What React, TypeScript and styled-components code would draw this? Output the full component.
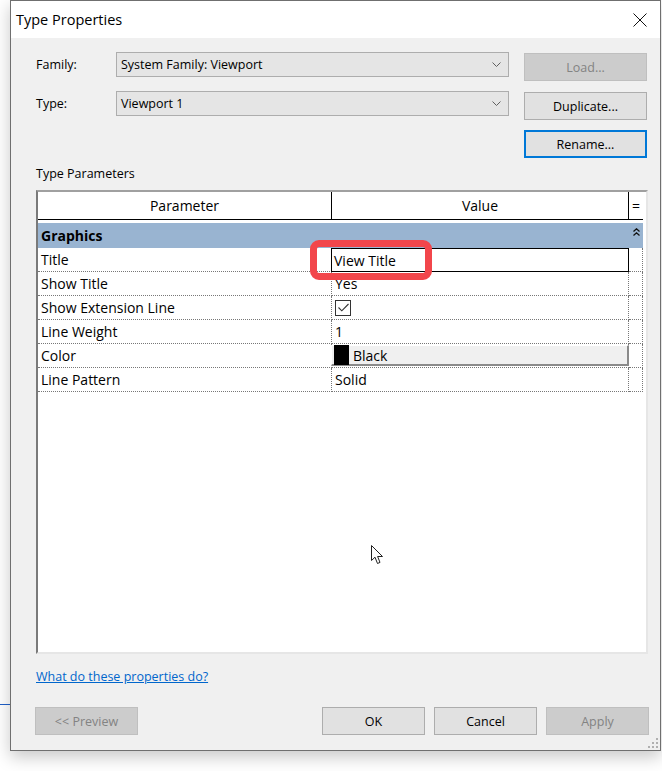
import React from "react";
import styled, { createGlobalStyle } from "styled-components";

const UI_FONT = `"Segoe UI", "Open Sans", "Noto Sans", sans-serif`;

const GlobalStyle = createGlobalStyle`
  html, body {
    margin: 0;
    padding: 0;
    background: #ffffff;
    font-family: ${UI_FONT};
    color: #000;
  }
  * {
    box-sizing: border-box;
  }
`;

const Desktop = styled.div`
  position: relative;
  width: 662px;
  height: 771px;
  overflow: hidden;
`;

// thin blue line of a window behind the dialog
const BackLine = styled.div`
  position: absolute;
  left: 0;
  top: 704px;
  width: 10px;
  height: 1px;
  background: #2060c8;
`;

const Dialog = styled.section`
  position: relative;
  margin-left: 10px;
  width: 651px;
  height: 751px;
  border: 1px solid #6f6f6f;
  display: flex;
  flex-direction: column;
  background: #f0f0f0;
  box-shadow: 0 6px 16px rgba(0, 0, 0, 0.22);
`;

const TitleBar = styled.header`
  height: 37px;
  flex: none;
  background: #ffffff;
  display: flex;
  align-items: center;
  justify-content: space-between;
  padding: 0 13px 0 5px;
  font-size: 14.5px;
`;

const CloseIcon = () => (
  <svg width="14" height="14" viewBox="0 0 14 14">
    <path d="M0.5 0.5 L13.5 13.5 M13.5 0.5 L0.5 13.5" stroke="#111" strokeWidth="1" />
  </svg>
);

const Body = styled.div`
  flex: 1;
  display: flex;
  flex-direction: column;
  padding: 14px 12px 15px 25px;
  font-size: 12.5px;
`;

const TopGrid = styled.div`
  display: grid;
  grid-template-columns: 65px 393px 123px;
  column-gap: 15px;
  grid-auto-rows: 29px;
  row-gap: 10px;
  align-items: start;
`;

const FieldLabel = styled.label`
  height: 25px;
  line-height: 25px;
`;

const Combo = styled.div`
  height: 25px;
  border: 1px solid #adadad;
  background: #e5e5e5;
  display: flex;
  align-items: center;
  justify-content: space-between;
  padding: 0 7px 0 4px;
`;

const Chevron = () => (
  <svg width="9" height="5" viewBox="0 0 9 5">
    <path d="M0.5 0.5 L4.5 4.5 L8.5 0.5" fill="none" stroke="#606060" strokeWidth="1" />
  </svg>
);

const Button = styled.button<{ $disabled?: boolean; $focused?: boolean }>`
  height: 28px;
  margin-top: ${(p) => (p.$focused ? 0 : 1)}px;
  font-family: ${UI_FONT};
  font-size: 12.5px;
  padding: 0;
  background: ${(p) => (p.$disabled ? "#cccccc" : "#e1e1e1")};
  color: ${(p) => (p.$disabled ? "#838383" : "#000")};
  border: ${(p) => (p.$focused ? "2px solid #0078d7" : p.$disabled ? "1px solid #bfbfbf" : "1px solid #adadad")};
`;

const SectionLabel = styled.div`
  margin-top: 7px;
  height: 16px;
  line-height: 16px;
  margin-bottom: 8px;
`;

const Table = styled.div`
  position: relative;
  height: 464px;
  flex: none;
  background: #ffffff;
  border-top: 2px solid #a0a0a0;
  border-left: 2px solid #7a7a7a;
  border-right: 2px solid #e6e6e6;
  border-bottom: 2px solid #e6e6e6;
  font-size: 14px;
  display: grid;
  grid-template-columns: 294px 297px 14px;
  grid-auto-rows: min-content;
  align-content: start;
`;

const HeadCell = styled.div<{ $last?: boolean }>`
  height: 28px;
  display: flex;
  align-items: center;
  justify-content: center;
  border-bottom: 1px solid #000;
  border-right: ${(p) => (p.$last ? "none" : "1px solid #000")};
  margin-bottom: 3px;
`;

const GroupRow = styled.div`
  grid-column: 1 / 3;
  height: 25px;
  background: #99b4d1;
  font-weight: bold;
  display: flex;
  align-items: center;
  padding-left: 3px;
`;

const GroupEnd = styled.div`
  height: 25px;
  background: #99b4d1;
  display: flex;
  justify-content: center;
  padding-top: 5px;
`;

const Cell = styled.div`
  height: 24px;
  display: flex;
  align-items: center;
  padding-left: 3px;
  border-bottom: 1px dotted #777;
  border-right: 1px dotted #777;
  white-space: nowrap;
`;

const EditBox = styled.div`
  height: 24px;
  border: 1px solid #000;
  display: flex;
  align-items: center;
  padding-left: 2px;
  margin-left: -1px;
`;

const ColorButton = styled.div`
  height: 24px;
  padding: 1px 0;
  border-bottom: 1px dotted #777;
  border-right: 1px dotted #777;
  display: flex;
`;

const ColorFace = styled.div`
  flex: 1;
  margin-left: -1px;
  margin-right: -1px;
  background: #f0f0f0;
  border-top: 1px solid #ffffff;
  border-left: 1px solid #ffffff;
  border-right: 2px solid #8a8a8a;
  border-bottom: 2px solid #8a8a8a;
  display: flex;
  align-items: center;
  padding-left: 2px;
  gap: 4px;
`;

const Swatch = styled.span<{ $color: string }>`
  width: 15px;
  height: 20px;
  background: ${(p) => p.$color};
`;

const CheckBox = styled.span`
  width: 16px;
  height: 16px;
  border: 1px solid #333;
  display: flex;
  align-items: center;
  justify-content: center;
`;

const Highlight = styled.div`
  position: absolute;
  left: 272px;
  top: 48px;
  width: 122px;
  height: 40px;
  border: 7px solid #f2464b;
  border-radius: 9px;
  pointer-events: none;
`;

const Cursor = styled.svg`
  position: absolute;
  left: 333px;
  top: 353px;
`;

const HelpLink = styled.a`
  margin-top: 15px;
  height: 16px;
  line-height: 16px;
  color: #0066cc;
  text-decoration: underline;
  align-self: flex-start;
`;

const Footer = styled.div`
  margin-top: 22px;
  display: flex;
  justify-content: space-between;
  margin-left: -1px;
  margin-right: -1px;
`;

const ButtonGroup = styled.div`
  display: flex;
  gap: 9px;
`;

const FooterButton = styled(Button)`
  width: 103px;
  margin-top: 0;
`;

const Grip = styled.svg`
  position: absolute;
  right: 2px;
  bottom: 2px;
`;

const rows: { name: string; value: React.ReactNode; kind?: "edit" | "color" }[] = [
  { name: "Title", value: "View Title", kind: "edit" },
  { name: "Show Title", value: "Yes" },
  {
    name: "Show Extension Line",
    value: (
      <CheckBox>
        <svg width="11" height="9" viewBox="0 0 11 9">
          <path d="M0.5 4.5 L3.8 7.8 L10.5 1" fill="none" stroke="#333" strokeWidth="1.1" />
        </svg>
      </CheckBox>
    ),
  },
  { name: "Line Weight", value: "1" },
  { name: "Color", value: "Black", kind: "color" },
  { name: "Line Pattern", value: "Solid" },
];

function PropertyTable() {
  return (
    <Table>
      <HeadCell>Parameter</HeadCell>
      <HeadCell>Value</HeadCell>
      <HeadCell $last>=</HeadCell>
      <GroupRow>Graphics</GroupRow>
      <GroupEnd>
        <svg width="7" height="8" viewBox="0 0 7 8">
          <path d="M0.5 3.5 L3.5 0.8 L6.5 3.5 M0.5 7.5 L3.5 4.8 L6.5 7.5" fill="none" stroke="#111" strokeWidth="1.3" />
        </svg>
      </GroupEnd>
      {rows.map((r) => (
        <React.Fragment key={r.name}>
          <Cell>{r.name}</Cell>
          {r.kind === "edit" ? (
            <EditBox>{r.value}</EditBox>
          ) : r.kind === "color" ? (
            <ColorButton>
              <ColorFace>
                <Swatch $color="#000" />
                {r.value}
              </ColorFace>
            </ColorButton>
          ) : (
            <Cell>{r.value}</Cell>
          )}
          <Cell />
        </React.Fragment>
      ))}
      <Highlight />
      <Cursor width="13" height="20" viewBox="0 0 13 20">
        <path
          d="M0.5 0.5 L0.5 15.5 L4 12.2 L6.5 18.5 L9 17.4 L6.6 11.5 L11.5 11.5 Z"
          fill="#fff"
          stroke="#222"
          strokeWidth="1"
        />
      </Cursor>
    </Table>
  );
}

export default function App() {
  return (
    <>
      <GlobalStyle />
      <Desktop>
        <BackLine />
        <Dialog>
          <TitleBar>
            <span>Type Properties</span>
            <CloseIcon />
          </TitleBar>
          <Body>
            <TopGrid>
              <FieldLabel>Family:</FieldLabel>
              <Combo>
                System Family: Viewport
                <Chevron />
              </Combo>
              <Button $disabled>Load...</Button>
              <FieldLabel>Type:</FieldLabel>
              <Combo>
                Viewport 1
                <Chevron />
              </Combo>
              <Button>Duplicate...</Button>
              <span />
              <span />
              <Button $focused>Rename...</Button>
            </TopGrid>
            <SectionLabel>Type Parameters</SectionLabel>
            <PropertyTable />
            <HelpLink href="#">What do these properties do?</HelpLink>
            <Footer>
              <FooterButton $disabled>&lt;&lt; Preview</FooterButton>
              <ButtonGroup>
                <FooterButton>OK</FooterButton>
                <FooterButton>Cancel</FooterButton>
                <FooterButton $disabled>Apply</FooterButton>
              </ButtonGroup>
            </Footer>
          </Body>
          <Grip width="10" height="10" viewBox="0 0 10 10">
            {[
              [8, 0],
              [8, 4],
              [4, 4],
              [8, 8],
              [4, 8],
              [0, 8],
            ].map(([x, y]) => (
              <rect key={`${x}-${y}`} x={x} y={y} width="2" height="2" fill="#b0b0b0" />
            ))}
          </Grip>
        </Dialog>
      </Desktop>
    </>
  );
}
